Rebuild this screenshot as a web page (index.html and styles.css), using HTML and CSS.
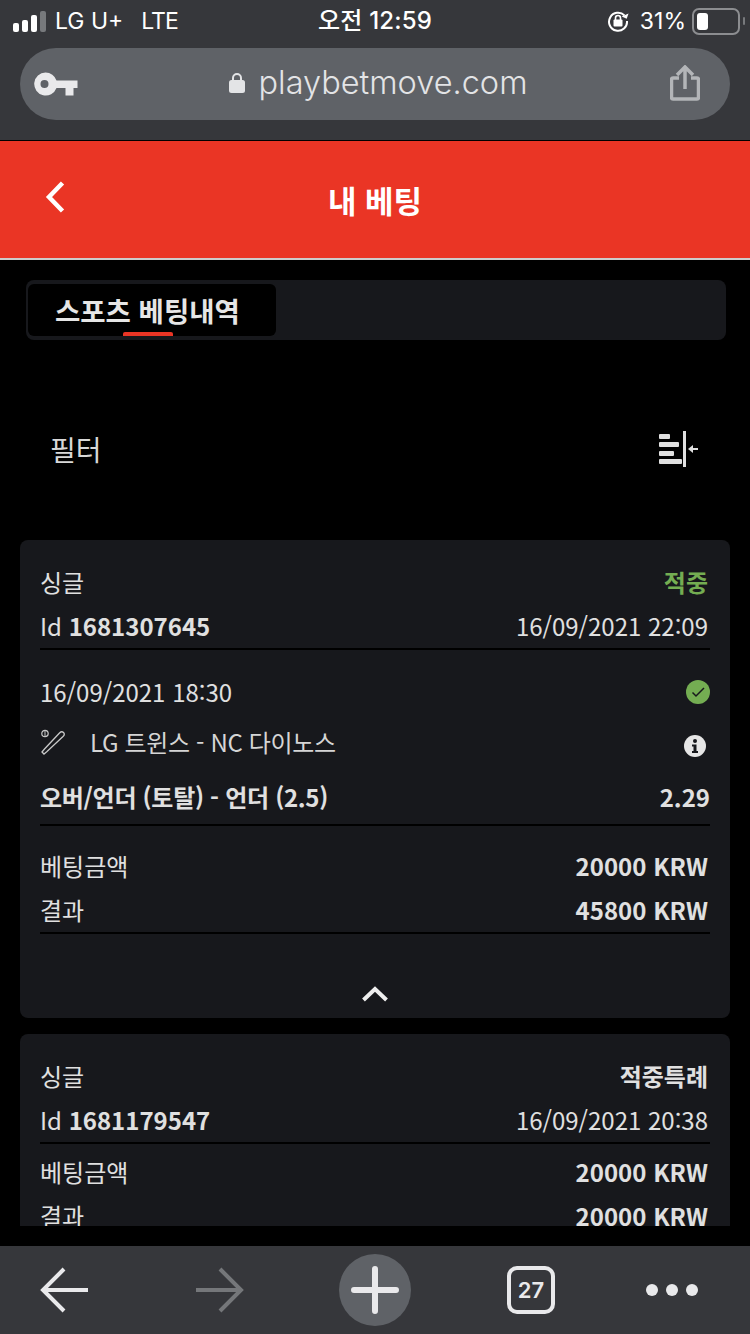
FILE: index.html
```html
<!DOCTYPE html>
<html lang="ko">
<head>
  <meta charset="UTF-8">
  <meta name="viewport" content="width=device-width, initial-scale=1.0">
  <title>내 베팅</title>
  <link rel="stylesheet" href="styles.css">
</head>
<body>
  <div id="app">
    <!-- browser chrome -->
    <div class="chrome">
      <div class="status-bar">
        <div class="status-left">
          <div class="signal"><i></i><i></i><i></i><i class="off"></i></div>
          <span class="carrier">LG U+</span>
          <span class="network">LTE</span>
        </div>
        <div class="status-time">오전 12:59</div>
        <div class="status-right">
          <svg class="rotation-lock" width="22" height="22" viewBox="0 0 22 22">
            <path d="M17.5 5.5A9 9 0 1 0 20 11" fill="none" stroke="#fff" stroke-width="2"/>
            <path d="M15 7.5l5.5 0.5 0-5.5z" fill="#fff" transform="rotate(20 18 6)"/>
            <rect x="6.5" y="9.5" width="9" height="7" rx="1" fill="#fff"/>
            <path d="M8.5 10V8a2.5 2.5 0 0 1 5 0v2" fill="none" stroke="#fff" stroke-width="1.6"/>
          </svg>
          <span class="battery-text">31%</span>
          <div class="battery"><div class="battery-fill"></div></div>
          <div class="battery-cap"></div>
        </div>
      </div>
      <div class="url-bar">
        <svg class="key-icon" width="44" height="24" viewBox="0 0 44 24">
          <path fill-rule="evenodd" fill="#e9e9eb" d="M11.5 0.5a11.500 11.500 0 0 1 11 8h21v7.500h-4v7.500h-8v-7.500h-9a11.500 11.500 0 1 1-11-15.500zM10.500 8a4 4 0 1 0 0 8 4 4 0 0 0 0-8z"/>
        </svg>
        <div class="url">
          <svg width="16" height="21" viewBox="0 0 16 21">
            <path d="M4 9V6a4 4 0 0 1 8 0v3" fill="none" stroke="#e3e4e6" stroke-width="2"/>
            <rect y="8" width="16" height="13" rx="2.500" fill="#e3e4e6"/>
          </svg>
          <span>playbetmove.com</span>
        </div>
        <svg class="share-icon" width="30" height="36" viewBox="0 0 30 36">
          <path d="M9 13H3a1.500 1.500 0 0 0-1.500 1.500v18A1.500 1.500 0 0 0 3 34h24a1.500 1.500 0 0 0 1.500-1.500v-18A1.500 1.500 0 0 0 27 13h-6" fill="none" stroke="#b3b5b8" stroke-width="3.500"/>
          <path d="M15 24V3M7 10l8-8 8 8" fill="none" stroke="#b3b5b8" stroke-width="3.500"/>
        </svg>
      </div>
    </div>

    <!-- header -->
    <div class="header">
      <svg class="back-icon" width="22" height="34" viewBox="0 0 22 34">
        <path d="M18.500 3L5 17l13.500 14" fill="none" stroke="#fff" stroke-width="4.500"/>
      </svg>
      <h1>내 베팅</h1>
    </div>

    <div class="content">
      <!-- tabs -->
      <div class="tabs">
        <div class="tab">스포츠 베팅내역<span class="tab-line"></span></div>
      </div>

      <!-- filter -->
      <div class="filter">
        <span>필터</span>
        <svg width="42" height="38" viewBox="0 0 42 38">
          <g fill="#e0e0e0">
            <rect x="1" y="4" width="11" height="5" rx="1"/>
            <rect x="1" y="12" width="20" height="5" rx="1"/>
            <rect x="1" y="21" width="15" height="5" rx="1"/>
            <rect x="1" y="29" width="23" height="5" rx="1"/>
            <rect x="25" y="1" width="3" height="36"/>
            <rect x="33" y="18" width="7" height="2"/>
            <path d="M30 19l5-4v8z"/>
          </g>
        </svg>
      </div>

      <!-- bets -->
      <div class="bets">
        <div class="card">
          <div class="row"><span>싱글</span><b class="won">적중</b></div>
          <div class="row row-line"><span>Id <b>1681307645</b></span><span>16/09/2021 22:09</span></div>
          <div class="detail">
            <div class="row"><span>16/09/2021 18:30</span>
              <svg width="24" height="24" viewBox="0 0 24 24">
                <circle cx="12" cy="12" r="12" fill="#74ad52"/>
                <path d="M6.500 12.500l3.500 3.500 8-8" fill="none" stroke="#17181c" stroke-width="1.500"/>
              </svg>
            </div>
            <div class="row teams">
              <span class="team-name">
                <svg class="bat-icon" width="26" height="26" viewBox="0 0 26 26">
                  <circle cx="5" cy="4.500" r="3.200" fill="none" stroke="#c8c8c8" stroke-width="1.200"/>
                  <path d="M5 2v5" stroke="#c8c8c8" stroke-width="1"/>
                  <path d="M2 23l2 2 3-2.500 16-15c1.500-1.500 1.500-3 0.500-4s-2.500-1-4 0.500l-15 16z" fill="none" stroke="#c8c8c8" stroke-width="1.300"/>
                </svg>
                LG 트윈스 - NC 다이노스
              </span>
              <svg class="info-icon" width="22" height="22" viewBox="0 0 22 22">
                <circle cx="11" cy="11" r="11" fill="#e6e6e6"/>
                <circle cx="11" cy="6" r="2" fill="#17181c"/>
                <path d="M8 9.500h4.500v6.500h1.500v2H8v-2h1.500v-4.500H8z" fill="#17181c"/>
              </svg>
            </div>
            <div class="row market row-line"><b>오버/언더 (토탈) - 언더 (2.5)</b><b>2.29</b></div>
          </div>
          <div class="amounts">
            <div class="row"><span>베팅금액</span><b>20000 KRW</b></div>
            <div class="row row-line"><span>결과</span><b>45800 KRW</b></div>
          </div>
          <div class="collapse">
            <svg width="28" height="16" viewBox="0 0 28 16">
              <path d="M2.500 14L14 3l11.500 11" fill="none" stroke="#eee" stroke-width="4"/>
            </svg>
          </div>
        </div>

        <div class="card">
          <div class="row"><span>싱글</span><b>적중특례</b></div>
          <div class="row row-line"><span>Id <b>1681179547</b></span><span>16/09/2021 20:38</span></div>
          <div class="amounts-short">
            <div class="row"><span>베팅금액</span><b>20000 KRW</b></div>
            <div class="row"><span>결과</span><b>20000 KRW</b></div>
          </div>
        </div>
      </div>
    </div>

    <!-- browser toolbar -->
    <div class="toolbar">
      <svg width="50" height="46" viewBox="0 0 50 46">
        <path d="M49 23H5M25 2L4 23l21 21" fill="none" stroke="#e9e9eb" stroke-width="4"/>
      </svg>
      <svg width="50" height="46" viewBox="0 0 50 46">
        <path d="M1 23h44M25 2l21 21-21 21" fill="none" stroke="#75777a" stroke-width="4"/>
      </svg>
      <div class="new-tab">
        <svg width="48" height="48" viewBox="0 0 48 48">
          <path d="M24 3v42M3 24h42" fill="none" stroke="#e9e9eb" stroke-width="6" stroke-linecap="round"/>
        </svg>
      </div>
      <div class="tab-count">27</div>
      <div class="dots"><i></i><i></i><i></i></div>
    </div>
  </div>
</body>
</html>
```
FILE: styles.css
```css
/* page */
body {
  margin: 0;
  background-color: black;
  color: #e0e0e0;
  font-family: "Noto Sans CJK KR", "Noto Sans", sans-serif;
  font-size: 24px;
}

#app {
  width: 750px;
  height: 1334px;
  display: flex;
  flex-direction: column;
  overflow: hidden;
}

/* browser chrome */
.chrome {
  height: 140px;
  flex-shrink: 0;
  background-color: #36373b;
}

.status-bar {
  height: 48px;
  position: relative;
  display: flex;
  justify-content: space-between;
  align-items: center;
  padding: 0 5px 6px 13px;
  box-sizing: border-box;
  color: #fff;
  font-family: Inter, "Noto Sans CJK KR", sans-serif;
  font-size: 23px;
}

.status-left,
.status-right {
  display: flex;
  align-items: center;
}

.signal {
  display: flex;
  align-items: flex-end;
  gap: 3px;
  height: 21px;
  margin-right: 9px;
}

.signal i {
  width: 6px;
  background-color: #fff;
  border-radius: 2px;
}

.signal i:nth-child(1) { height: 9px; }
.signal i:nth-child(2) { height: 12px; }
.signal i:nth-child(3) { height: 17px; }
.signal i:nth-child(4) { height: 21px; }
.signal i.off { background-color: #77797c; }

.network {
  margin-left: 18px;
  letter-spacing: -1px;
}

.status-time {
  position: absolute;
  left: 318px;
  top: 1px;
  font-weight: 500;
  font-size: 24px;
  letter-spacing: 0.2px;
}

.rotation-lock {
  margin-right: 11px;
}

.battery-text {
  margin-right: 6px;
}

.battery {
  width: 38px;
  height: 17px;
  border: 2px solid #8c8d90;
  border-radius: 7px;
  padding: 3px;
}

.battery-fill {
  width: 11px;
  height: 100%;
  background-color: #fff;
  border-radius: 3px;
}

.battery-cap {
  width: 2px;
  height: 8px;
  margin-left: 3px;
  background-color: #77797c;
  border-radius: 1px;
}

.url-bar {
  height: 72px;
  margin: 0 20px;
  padding: 0 30px 0 14px;
  display: flex;
  align-items: center;
  justify-content: space-between;
  background-color: #5f6267;
  border-radius: 36px;
}

.url {
  display: flex;
  align-items: center;
  gap: 14px;
  color: #e3e4e6;
  font-family: Inter, sans-serif;
  font-weight: 300;
  font-size: 32.5px;
  margin: -4px 0 0 8px;
}

.share-icon {
  margin-top: -2px;
}

/* header */
.header {
  height: 117px;
  margin-top: 1px;
  flex-shrink: 0;
  position: relative;
  display: flex;
  justify-content: center;
  align-items: center;
  background-color: #ea3525;
  border-bottom: 2px solid #ccc;
}

.header h1 {
  margin: 0;
  color: #fff;
  font-size: 31px;
  font-weight: bold;
}

.back-icon {
  position: absolute;
  left: 44px;
  top: 39px;
}

/* content */
.content {
  flex: 1;
  min-height: 0;
  display: flex;
  flex-direction: column;
  margin-bottom: 20px;
}

.tabs {
  height: 60px;
  margin: 20px 24px 0 26px;
  padding: 4px 2px;
  box-sizing: border-box;
  background-color: #17181c;
  border-radius: 8px;
}

.tab {
  position: relative;
  width: 248px;
  height: 52px;
  padding-left: 27px;
  box-sizing: border-box;
  background-color: black;
  border-radius: 6px;
  color: #e6e6e6;
  font-size: 27.5px;
  font-weight: bold;
  line-height: 52px;
}

.tab-line {
  position: absolute;
  left: 95px;
  bottom: 0;
  width: 50px;
  height: 4px;
  background-color: #ea3525;
  border-radius: 2px 2px 0 0;
}

.filter {
  height: 200px;
  flex-shrink: 0;
  padding: 18px 50px 0 50px;
  box-sizing: border-box;
  display: flex;
  justify-content: space-between;
  align-items: center;
  font-size: 28px;
  color: #d8d8d8;
}

.bets {
  flex: 1;
  min-height: 0;
  overflow: hidden;
  margin: 0 20px;
}

.card {
  padding: 21px 20px 0;
  margin-bottom: 16px;
  background-color: #17181c;
  border-radius: 8px;
}

.row {
  height: 44px;
  box-sizing: border-box;
  display: flex;
  justify-content: space-between;
  align-items: center;
  padding: 0 2px 3px 0;
}

.row b {
  font-weight: bold;
}

.row-line {
  height: 45px;
  padding-bottom: 2px;
  border-bottom: 2px solid black;
}

.won {
  color: #74ad52;
}

.detail {
  padding-top: 21px;
}

.detail .row {
  padding-right: 0;
}

.detail .teams {
  margin-top: 6px;
  padding-right: 4px;
  color: #d5d5d5;
}

.info-icon {
  margin-top: 9px;
}

.team-name {
  display: flex;
  align-items: center;
  letter-spacing: -0.35px;
}

.bat-icon {
  margin-right: 24px;
}

.market {
  margin-top: 10px;
  height: 51px;
  padding-bottom: 0;
  align-items: flex-start;
  line-height: 43px;
}

.market b:first-child {
  letter-spacing: -0.3px;
}

.amounts {
  padding-top: 19px;
}

.amounts-short {
  padding-top: 7px;
}

.collapse {
  height: 84px;
  display: flex;
  justify-content: center;
  align-items: flex-end;
  padding-bottom: 16px;
  box-sizing: border-box;
}

/* browser toolbar */
.toolbar {
  height: 88px;
  flex-shrink: 0;
  padding-left: 39px;
  display: grid;
  grid-template-columns: 156px 144px 168px 139px auto;
  align-items: center;
  background-color: #36373b;
}

.new-tab {
  width: 72px;
  height: 72px;
  display: flex;
  justify-content: center;
  align-items: center;
  background-color: #5f6267;
  border-radius: 50%;
}

.tab-count {
  width: 48px;
  height: 48px;
  box-sizing: border-box;
  display: flex;
  justify-content: center;
  align-items: center;
  border: 4px solid #e9e9eb;
  border-radius: 10px;
  color: #e9e9eb;
  font-family: Inter, sans-serif;
  font-size: 22px;
  font-weight: 600;
}

.dots {
  display: flex;
  gap: 8px;
}

.dots i {
  width: 12px;
  height: 12px;
  background-color: #e9e9eb;
  border-radius: 50%;
}
```
